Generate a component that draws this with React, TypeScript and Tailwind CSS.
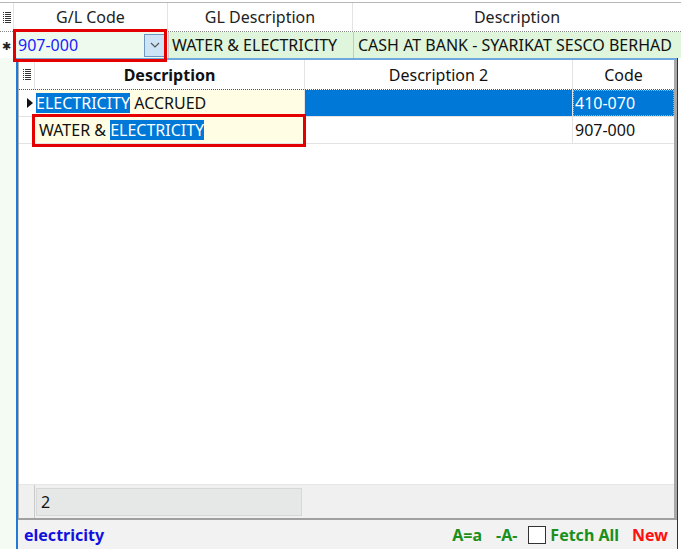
import React from 'react';

const font = { fontFamily: '"Noto Sans", "Open Sans", Arial, sans-serif' };

const GridIcon = () => (
  <svg width="8" height="11" viewBox="0 0 8 11" className="block">
    {[0, 2, 4, 6, 8, 10].map((y) => (
      <g key={y}>
        <rect x="0" y={y} width="1" height="1" fill="#333" />
        <rect x="2" y={y} width="6" height="1" fill="#333" />
      </g>
    ))}
  </svg>
);

const Hl = ({ children }: { children: React.ReactNode }) => (
  <span className="bg-[#0078d7] text-white">{children}</span>
);

export default function App() {
  return (
    <div className="w-[681px] h-[549px] relative overflow-hidden bg-white text-[16px] leading-[20px] text-[#111]" style={font}>
      {/* Main grid header */}
      <div className="h-[29px] border-t border-[#b8b8b8] mt-[2px] flex text-[#222] bg-white">
        <div className="w-[14px] flex items-center justify-center border-r border-[#e3e3e3]">
          <GridIcon />
        </div>
        <div className="w-[154px] flex items-center justify-center border-r border-[#e3e3e3]">G/L Code</div>
        <div className="w-[185px] flex items-center justify-center border-r border-[#e3e3e3]">GL Description</div>
        <div className="flex-1 flex items-center justify-center">Description</div>
      </div>

      {/* Main grid data row */}
      <div className="h-[27px] flex border-t border-dotted border-[#888]">
        <div className="w-[14px] flex items-center justify-start pl-[2px] text-[11px] leading-none bg-white">
          <span className="text-[#222]">✱</span>
        </div>
        <div className="w-[154px] flex items-center bg-[#eefaee] relative">
          <span className="pl-[4px] text-[#1a1aff]">907-000</span>
          <div className="ml-auto mr-[3px] w-[21px] h-[23px] bg-[#cde4f7] border border-[#6f97c2] flex items-center justify-center">
            <svg width="10" height="6" viewBox="0 0 10 6">
              <path d="M1 1 L5 5 L9 1" stroke="#555" strokeWidth="1.2" fill="none" />
            </svg>
          </div>
        </div>
        <div className="w-[185px] flex items-center pl-[3px] bg-[#dff5dc] border-l border-[#c8c8c8] whitespace-nowrap">
          WATER &amp; ELECTRICITY
        </div>
        <div className="flex-1 flex items-center pl-[4px] bg-[#dff5dc] border-l border-[#c8c8c8] whitespace-nowrap overflow-hidden">
          CASH AT BANK - SYARIKAT SESCO BERHAD
        </div>
      </div>

      {/* Lower area */}
      <div className="flex h-[491px]">
        <div className="w-[16px] bg-[#f3fbf3]" />
        <div className="w-[661px] flex flex-col border-l-2 border-[#1e7ad6] border-t-2 border-t-[#6fa8dc]">
          <div className="flex-1 flex flex-col border-l border-[#b0b0b0] border-r-[3px] border-r-[#a8a8a8] bg-white">
            {/* popup header */}
            <div className="h-[30px] flex border-b border-dotted border-[#555]">
              <div className="w-[16px] flex items-center justify-center border-r border-[#e3e3e3]">
                <GridIcon />
              </div>
              <div className="w-[270px] flex items-center justify-center font-bold border-r border-[#e3e3e3]">Description</div>
              <div className="w-[268px] flex items-center justify-center border-r border-[#e3e3e3]">Description 2</div>
              <div className="flex-1 flex items-center justify-center">Code</div>
            </div>
            {/* row 1 */}
            <div className="h-[27px] flex border-b border-[#e3e3e3]">
              <div className="w-[16px] flex items-center justify-end pr-[2px]">
                <svg width="6" height="10" viewBox="0 0 6 10">
                  <path d="M0 0 L6 5 L0 10 Z" fill="#111" />
                </svg>
              </div>
              <div className="w-[270px] flex items-center bg-[#fffde3] pl-[1px] whitespace-nowrap border-r border-[#e3e3e3]">
                <Hl>ELECTRICITY</Hl>
                <span>&nbsp;ACCRUED</span>
              </div>
              <div className="w-[268px] bg-[#0078d7] border-r border-[#e3e3e3]" />
              <div className="flex-1 flex items-center pl-[1px] bg-[#0078d7] text-white border border-dotted border-[#f0a040]">
                410-070
              </div>
            </div>
            {/* row 2 */}
            <div className="h-[27px] flex border-b border-[#e3e3e3]">
              <div className="w-[16px]" />
              <div className="w-[270px] flex items-center bg-[#fffde3] pl-[4px] whitespace-nowrap border-r border-[#e3e3e3]">
                <span>WATER &amp;&nbsp;</span>
                <Hl>ELECTRICITY</Hl>
              </div>
              <div className="w-[268px] border-r border-[#e3e3e3]" />
              <div className="flex-1 flex items-center pl-[2px]">907-000</div>
            </div>
            <div className="flex-1" />
            {/* footer */}
            <div className="h-[34px] flex items-center bg-[#f0f0f0] border-t border-[#e6e6e6]">
              <div className="w-[16px] h-full border-r border-[#c8c8c8]" />
              <div className="ml-[1px] w-[266px] h-[28px] bg-[#e6e8e8] border border-[#d6d8d8] flex items-center pl-[4px]">2</div>
            </div>
          </div>
          {/* bottom status bar */}
          <div className="h-[31px] flex items-center bg-[#f2f2f2] border-t-2 border-[#a0a0a0] font-bold">
            <span className="ml-[6px] text-[#1010e0]">electricity</span>
            <div className="ml-auto flex items-center mr-[9px]">
              <span className="text-[#1b8f1b]">A=a</span>
              <span className="ml-[14px] text-[#1b8f1b]">-A-</span>
              <span className="ml-[11px] w-[18px] h-[18px] border border-[#333] bg-white inline-block" />
              <span className="ml-[4px] text-[#1b8f1b]">Fetch All</span>
              <span className="ml-[13px] text-[#ff1010]">New</span>
            </div>
          </div>
        </div>
        <div className="flex-1 bg-white border-l border-[#333]" />
      </div>

      {/* red highlight boxes */}
      <div className="absolute left-[13px] top-[29px] w-[154px] h-[33px] border-[3px] border-[#e50000] pointer-events-none" />
      <div className="absolute left-[32px] top-[114px] w-[274px] h-[33px] border-[3px] border-[#e50000] pointer-events-none" />
    </div>
  );
}
